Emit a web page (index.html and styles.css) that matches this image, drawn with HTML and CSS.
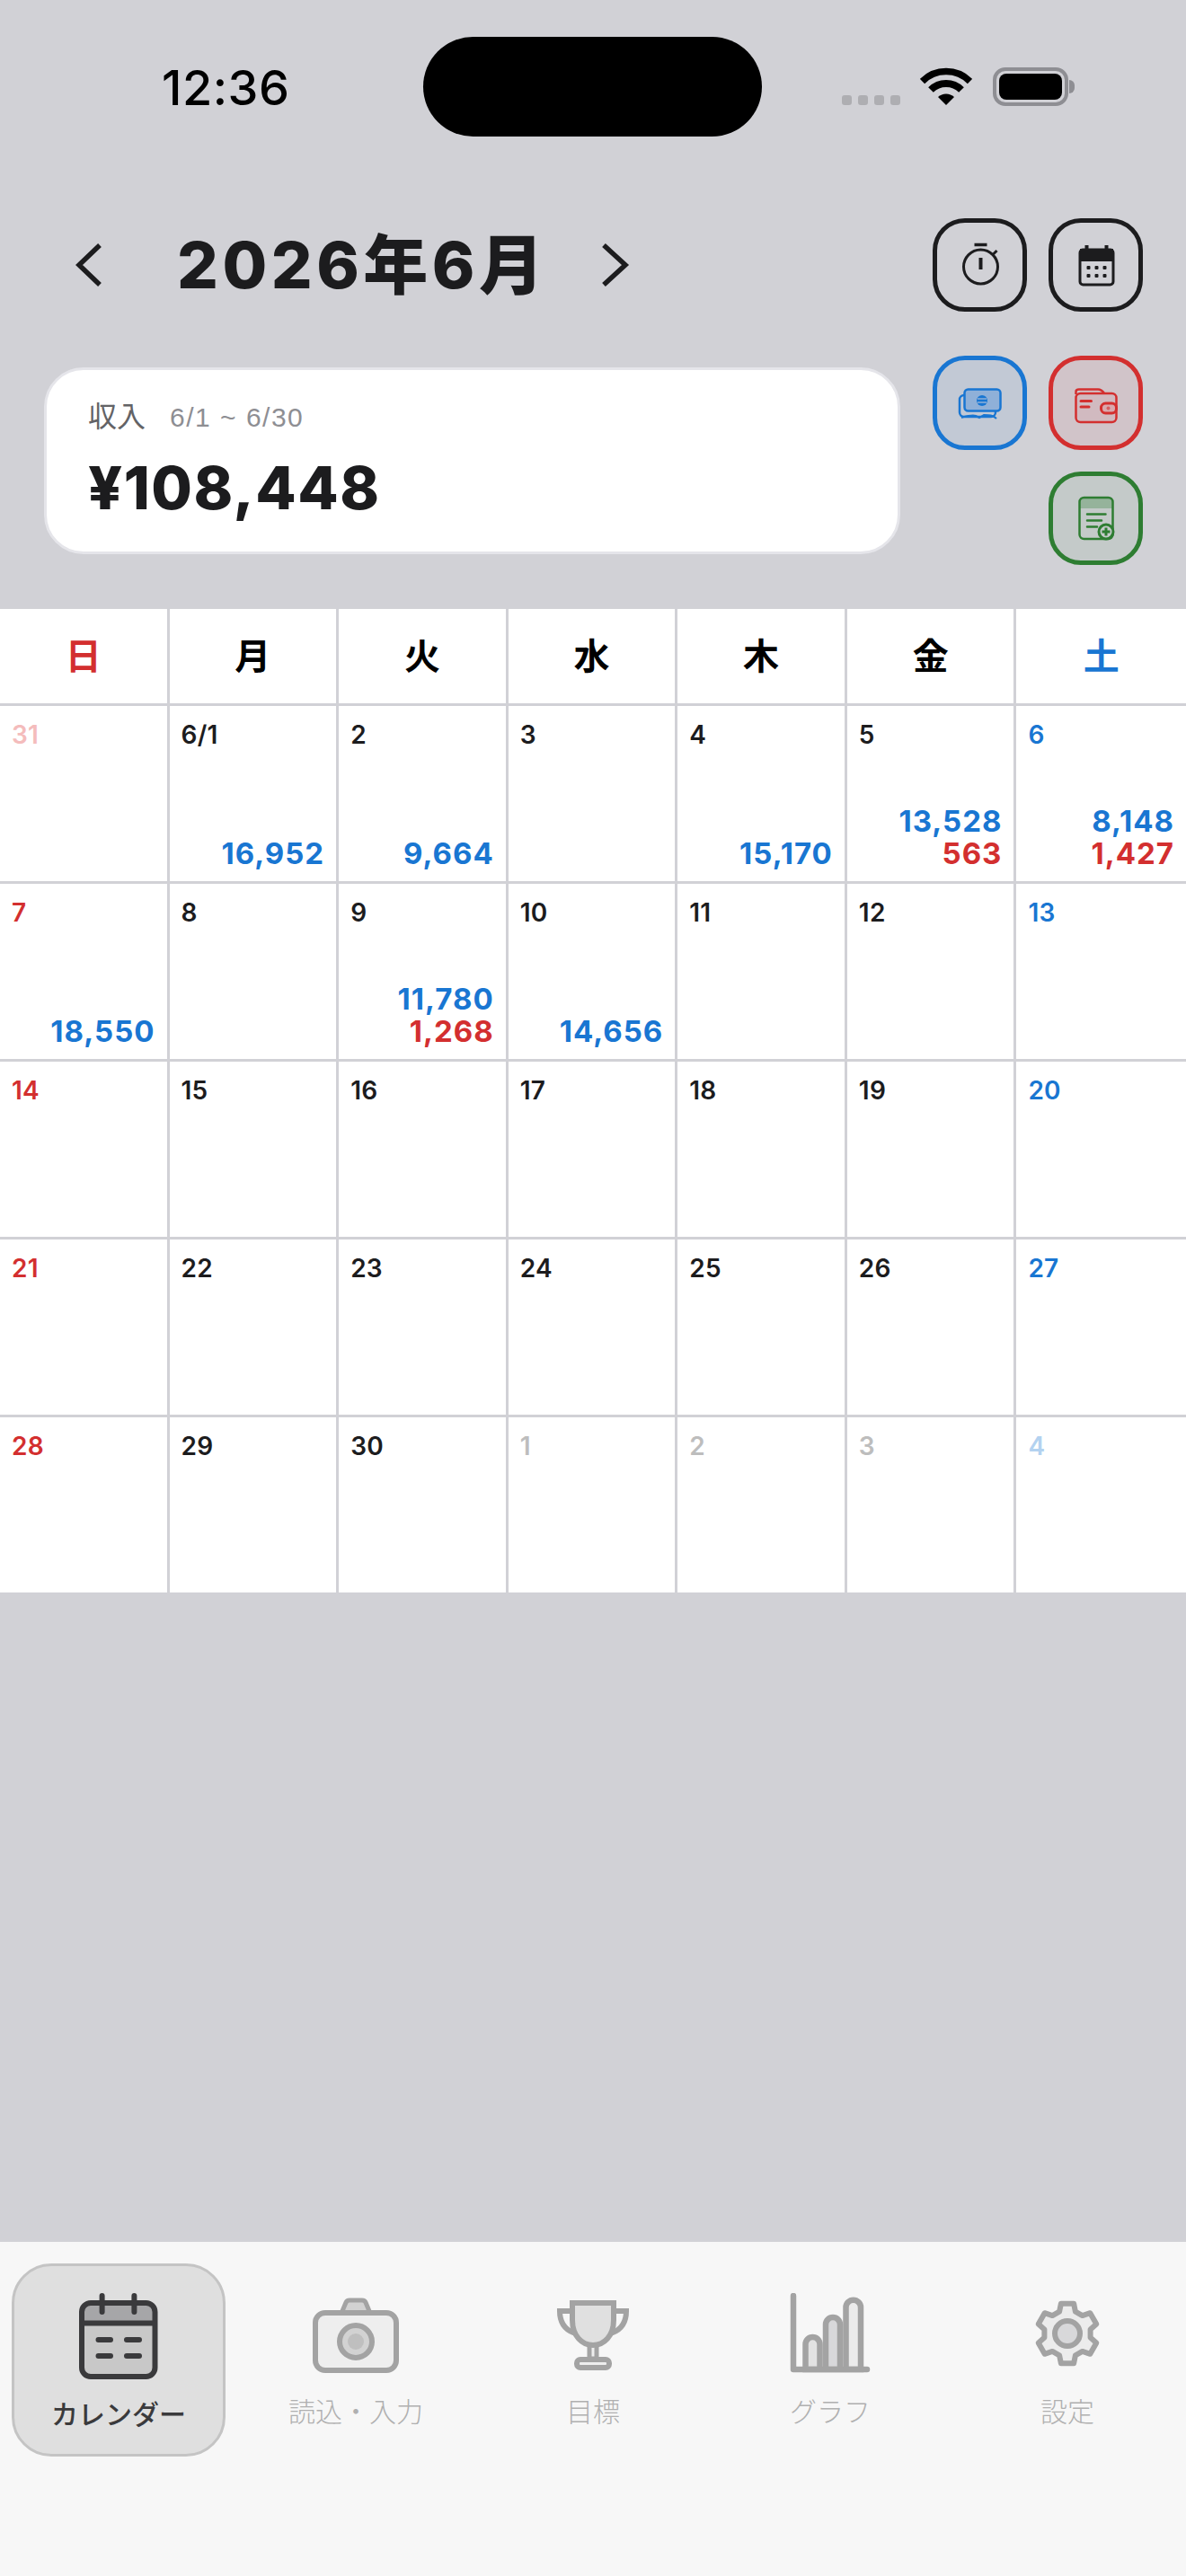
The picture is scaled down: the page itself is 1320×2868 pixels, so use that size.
FILE: index.html
```html
<!DOCTYPE html>
<html lang="ja">
<head>
<meta charset="utf-8">
<title>カレンダー</title>
<link rel="stylesheet" href="styles.css">
</head>
<body>
<div class="phone">
  <header class="status">
    <div class="time">12:36</div>
    <div class="island"></div>
    <div class="status-right">
      <div class="signal"><i></i><i></i><i></i><i></i></div>
      <svg class="wifi" width="58" height="42" viewBox="0 0 58 42">
        <path d="M2.5 15.5A37.5 37.5 0 0 1 55.5 15.5" fill="none" stroke="#000" stroke-width="7.5"/>
        <path d="M12 25A24 24 0 0 1 46 25" fill="none" stroke="#000" stroke-width="8"/>
        <path d="M20 33A13 13 0 0 1 38 33L29 42Z" fill="#000"/>
      </svg>
      <div class="battery"><div class="battery-level"></div></div>
    </div>
  </header>

  <section class="top">
    <div class="top-left">
      <div class="month-nav">
        <svg class="chev" width="48" height="64" viewBox="0 0 48 64"><path d="M36 10L13 32L36 54" fill="none" stroke="#1c1c1e" stroke-width="5.5"/></svg>
        <h1 class="month">2026年6月</h1>
        <svg class="chev" width="48" height="64" viewBox="0 0 48 64"><path d="M11 10L35 32L11 54" fill="none" stroke="#1c1c1e" stroke-width="5.5"/></svg>
      </div>
      <div class="summary">
        <div class="summary-head"><span class="summary-label">収入</span><span class="summary-range">6/1 ~ 6/30</span></div>
        <div class="summary-amount">¥108,448</div>
      </div>
    </div>
    <div class="actions">
      <button class="act act-dark">
        <svg width="64" height="64" viewBox="0 0 64 64" fill="none" stroke="#1c1c1e">
          <circle cx="32.5" cy="34" r="19" stroke-width="3"/>
          <path d="M25.5 9.5H39.5" stroke-width="3.5"/>
          <path d="M32.5 24V37" stroke-width="4"/>
          <path d="M46.5 20L50.5 16" stroke-width="3"/>
        </svg>
      </button>
      <button class="act act-dark">
        <svg width="64" height="64" viewBox="0 0 64 64">
          <path d="M21.5 10V18M43.5 10V18" stroke="#1c1c1e" stroke-width="4" fill="none"/>
          <rect x="14" y="15" width="37" height="39" rx="3.5" fill="none" stroke="#1c1c1e" stroke-width="3"/>
          <path d="M14 14H51V28H14Z" fill="#1c1c1e"/>
          <g fill="#1c1c1e">
            <rect x="21.5" y="33" width="4" height="4" rx="1"/><rect x="30.5" y="33" width="4" height="4" rx="1"/><rect x="39.5" y="33" width="4" height="4" rx="1"/>
            <rect x="21.5" y="42" width="4" height="4" rx="1"/><rect x="30.5" y="42" width="4" height="4" rx="1"/><rect x="39.5" y="42" width="4" height="4" rx="1"/>
          </g>
        </svg>
      </button>
      <button class="act act-blue">
        <svg width="64" height="64" viewBox="0 0 64 64" fill="none" stroke="#1976d2" stroke-width="2.5">
          <rect x="9" y="23" width="40" height="24" rx="5"/>
          <rect x="14.5" y="16.5" width="40" height="24" rx="4" fill="#8fb0d8"/>
          <circle cx="34" cy="29" r="6" fill="#1976d2" stroke="none"/>
          <path d="M29 27H39M29 31H39" stroke="#8fb0d8" stroke-width="1.5"/>
          <path d="M11 48C18 46 24 45 27 46L31 48L36 45C42 45 46 45 50 49" stroke-width="2"/>
        </svg>
      </button>
      <button class="act act-red">
        <svg width="64" height="64" viewBox="0 0 64 64" fill="none" stroke="#d32f2f" stroke-width="2.5">
          <path d="M9.5 22V19C9.500 17 11 16.500 13 16.500H34C37 16.500 39 18 41 21" />
          <rect x="9.500" y="21" width="45" height="32" rx="5" fill="#d1b4ba" fill-opacity=".6"/>
          <rect x="37.500" y="32" width="17" height="11" rx="5" fill="#d9a9ae" stroke-width="3"/>
          <circle cx="45.500" cy="37.500" r="2" fill="#d32f2f" fill-opacity=".6" stroke="none"/>
          <path d="M15 29.500H26.500M15 36H24" stroke-width="3" stroke-linecap="round"/>
        </svg>
      </button>
      <button class="act act-green act-third">
        <svg width="64" height="64" viewBox="0 0 64 64" fill="none" stroke="#2e7d32" stroke-width="2.5">
          <path d="M14 9.500H50V21H14Z" fill="#95b39b" stroke="none"/>
          <rect x="13.500" y="9" width="37" height="46" rx="5"/>
          <path d="M22 27.500H42.500M22 34.500H38M22 41.500H33" stroke-width="2.500" stroke-linecap="round"/>
          <circle cx="43" cy="47" r="8" fill="#c4cbc9" stroke-width="3"/>
          <path d="M38.500 47H47.500M43 42.500V51.500" stroke-width="3"/>
        </svg>
      </button>
    </div>
  </section>

  <section class="calendar">
    <div class="wd sun">日</div><div class="wd">月</div><div class="wd">火</div><div class="wd">水</div><div class="wd">木</div><div class="wd">金</div><div class="wd sat">土</div>

    <div class="cell"><span class="d sun faint">31</span></div>
    <div class="cell"><span class="d">6/1</span><div class="amts"><span class="inc">16,952</span></div></div>
    <div class="cell"><span class="d">2</span><div class="amts"><span class="inc">9,664</span></div></div>
    <div class="cell"><span class="d">3</span></div>
    <div class="cell"><span class="d">4</span><div class="amts"><span class="inc">15,170</span></div></div>
    <div class="cell"><span class="d">5</span><div class="amts"><span class="inc">13,528</span><span class="exp">563</span></div></div>
    <div class="cell"><span class="d sat">6</span><div class="amts"><span class="inc">8,148</span><span class="exp">1,427</span></div></div>

    <div class="cell"><span class="d sun">7</span><div class="amts"><span class="inc">18,550</span></div></div>
    <div class="cell"><span class="d">8</span></div>
    <div class="cell"><span class="d">9</span><div class="amts"><span class="inc">11,780</span><span class="exp">1,268</span></div></div>
    <div class="cell"><span class="d">10</span><div class="amts"><span class="inc">14,656</span></div></div>
    <div class="cell"><span class="d">11</span></div>
    <div class="cell"><span class="d">12</span></div>
    <div class="cell"><span class="d sat">13</span></div>

    <div class="cell"><span class="d sun">14</span></div>
    <div class="cell"><span class="d">15</span></div>
    <div class="cell"><span class="d">16</span></div>
    <div class="cell"><span class="d">17</span></div>
    <div class="cell"><span class="d">18</span></div>
    <div class="cell"><span class="d">19</span></div>
    <div class="cell"><span class="d sat">20</span></div>

    <div class="cell"><span class="d sun">21</span></div>
    <div class="cell"><span class="d">22</span></div>
    <div class="cell"><span class="d">23</span></div>
    <div class="cell"><span class="d">24</span></div>
    <div class="cell"><span class="d">25</span></div>
    <div class="cell"><span class="d">26</span></div>
    <div class="cell"><span class="d sat">27</span></div>

    <div class="cell"><span class="d sun">28</span></div>
    <div class="cell"><span class="d">29</span></div>
    <div class="cell"><span class="d">30</span></div>
    <div class="cell"><span class="d faint">1</span></div>
    <div class="cell"><span class="d faint">2</span></div>
    <div class="cell"><span class="d faint">3</span></div>
    <div class="cell"><span class="d sat faint">4</span></div>
  </section>

  <nav class="tabs">
    <div class="tab tab-active">
      <svg width="96" height="96" viewBox="0 0 96 96">
        <rect x="7" y="11" width="81.500" height="82" rx="10" fill="#c8c8c8"/>
        <path d="M7 33.500V21A10 10 0 0 1 17 11H78.500A10 10 0 0 1 88.500 21V33.500Z" fill="#a6a6a8"/>
        <rect x="7" y="11" width="81.500" height="82" rx="10" fill="none" stroke="#3a3a3c" stroke-width="6"/>
        <path d="M7 33.500H88.500" stroke="#3a3a3c" stroke-width="6"/>
        <path d="M29.600 3V21M65.400 3V21M25.500 52H39M57 52H71M25.500 70H39M57 70H71" stroke="#3a3a3c" stroke-width="6" stroke-linecap="round" fill="none"/>
      </svg>
      <span class="tab-label">カレンダー</span>
    </div>
    <div class="tab">
      <svg width="96" height="96" viewBox="0 0 96 96" stroke="#a3a3a3" stroke-width="6">
        <path d="M33 20L37 10.500Q38 8 41 8H55Q58 8 59 10.500L63 20" fill="#d2d2d2" stroke-width="5"/>
        <rect x="3" y="22" width="90" height="64" rx="11" fill="#eeeeee"/>
        <circle cx="48" cy="54" r="18" fill="#d2d2d2"/>
        <circle cx="48" cy="54" r="9" fill="#bfbfbf" stroke="none"/>
      </svg>
      <span class="tab-label">読込・入力</span>
    </div>
    <div class="tab">
      <svg width="96" height="96" viewBox="0 0 96 96" stroke="#a3a3a3" stroke-width="6" fill="none">
        <path d="M74 20H85C85 32 80 40 70 44M22 20H11C11 32 16 40 26 44" stroke-linecap="round"/>
        <path d="M44 56V73H52V56" fill="#eeeeee" stroke-width="5"/>
        <path d="M25 11H71V30C71 48 60 58 48 58C36 58 25 48 25 30Z" fill="#e0e0e0"/>
        <rect x="30" y="74" width="36" height="9" rx="4" fill="#eeeeee"/>
      </svg>
      <span class="tab-label">目標</span>
    </div>
    <div class="tab">
      <svg width="96" height="96" viewBox="0 0 96 96" stroke="#a3a3a3" stroke-width="6.500" fill="none">
        <path d="M20.500 85V57A8 8 0 0 1 36.500 57V85Z" fill="#e2e2e2"/>
        <path d="M43 85V35A8 8 0 0 1 59 35V85Z" fill="#d8d8da"/>
        <path d="M65.500 85V16A8 8 0 0 1 82 16V85Z" fill="#ebebeb"/>
        <path d="M7 3V85H89" stroke-linecap="round" stroke-linejoin="round"/>
      </svg>
      <span class="tab-label">グラフ</span>
    </div>
    <div class="tab">
      <svg width="96" height="96" viewBox="0 0 96 96" stroke="#a3a3a3" stroke-width="6" stroke-linejoin="round">
        <path d="M39.100 20.600L40.900 11.700H55.100L56.900 20.600L64.700 25.100L73.300 22.200L80.300 34.500L73.600 40.500V49.500L80.300 55.500L73.300 67.800L64.700 64.900L56.900 69.400L55.100 78.300H40.900L39.100 69.400L31.300 64.900L22.700 67.800L15.700 55.500L22.400 49.500V40.500L15.700 34.500L22.700 22.200L31.300 25.100Z" fill="#ececec"/>
        <circle cx="48" cy="45" r="14" fill="#d8d8da"/>
      </svg>
      <span class="tab-label">設定</span>
    </div>
  </nav>
</div>
</body>
</html>
```

FILE: styles.css
```css
* { box-sizing: border-box; }
html, body { margin: 0; padding: 0; }
body {
  background: #d1d1d6;
  font-family: Inter, "Noto Sans CJK JP", sans-serif;
  color: #1c1c1e;
}
.phone {
  width: 1320px;
  height: 2868px;
  display: flex;
  flex-direction: column;
  overflow: hidden;
}

/* status bar */
.status {
  height: 243px;
  flex: none;
  display: grid;
  grid-template-columns: 471px 377px 1fr;
  align-items: start;
}
.time {
  margin: 66px 0 0 180px;
  font-size: 54px;
  font-weight: 500;
  line-height: 64px;
  letter-spacing: .5px;
  color: #000;
}
.island {
  margin-top: 41px;
  height: 111px;
  border-radius: 56px;
  background: #000;
}
.status-right {
  margin: 75px 0 0 89px;
  height: 43px;
  display: flex;
  align-items: flex-end;
}
.signal {
  display: flex;
  gap: 7px;
  margin: 0 22px 1px 0;
}
.signal i {
  width: 11px;
  height: 11px;
  border-radius: 3px;
  background: #aeaeb2;
}
.wifi { margin-bottom: 1px; }
.battery {
  position: relative;
  width: 84px;
  height: 43px;
  margin-left: 23px;
  padding: 3px;
  border: 4px solid #8e8e93;
  border-radius: 14px;
}
.battery::after {
  content: "";
  position: absolute;
  left: 81px;
  top: 10px;
  width: 6px;
  height: 15px;
  border-radius: 0 6px 6px 0;
  background: #8e8e93;
}
.battery-level {
  height: 100%;
  border-radius: 8px;
  background: #000;
}

/* top area */
.top {
  flex: none;
  display: flex;
  justify-content: space-between;
  padding: 0 48px 49px 49px;
}
.top-left { width: 953px; }
.month-nav {
  height: 104px;
  display: flex;
  align-items: center;
  padding-left: 26px;
}
.month {
  margin: 0 0 0 74px;
  width: 464px;
  font-size: 72px;
  font-weight: 800;
  line-height: 104px;
  letter-spacing: 4.500px;
  white-space: nowrap;
}
.summary {
  margin-top: 62px;
  height: 208px;
  padding: 30px 46px 0;
  border: 3px solid #e5e5ea;
  border-radius: 44px;
  background: #fff;
}
.summary-head {
  display: flex;
  align-items: baseline;
  line-height: 44px;
}
.summary-label {
  font-size: 32px;
  color: #636366;
}
.summary-range {
  margin-left: 27px;
  font-family: "Liberation Sans", sans-serif;
  font-size: 30px;
  letter-spacing: 1.500px;
  color: #8e8e93;
}
.summary-amount {
  margin-top: 18px;
  font-size: 66px;
  font-weight: 800;
  line-height: 76px;
  letter-spacing: 1.500px;
}
.actions {
  width: 234px;
  display: grid;
  grid-template-columns: 105px 105px;
  grid-template-rows: 129px 105px 104px;
  column-gap: 24px;
  row-gap: 24px;
}
.act {
  margin: 0;
  padding: 0;
  display: flex;
  align-items: center;
  justify-content: center;
  border: 5px solid;
  border-radius: 36px;
  background: transparent;
}
.act-dark { border-color: #1c1c1e; height: 104px; }
.act-blue { border-color: #1976d2; background: rgba(25, 118, 210, .08); }
.act-red { border-color: #d32f2f; background: rgba(211, 47, 47, .08); }
.act-green { border-color: #2e7d32; background: rgba(46, 125, 50, .08); }
.act-third { grid-column: 2; }

/* calendar */
.calendar {
  flex: none;
  display: grid;
  grid-template-columns: repeat(7, 1fr);
  grid-template-rows: 108px repeat(5, 198px);
  background: #fff;
}
.wd, .cell {
  border-right: 3px solid #d1d1d6;
  border-bottom: 3px solid #d1d1d6;
}
.wd:nth-child(7n), .cell:nth-child(7n) { border-right-width: 0; }
.wd {
  display: flex;
  align-items: center;
  justify-content: center;
  padding-bottom: 6px;
  font-family: "Noto Sans CJK JP", sans-serif;
  font-size: 40px;
  font-weight: 700;
  color: #000;
}
.cell {
  display: flex;
  flex-direction: column;
  padding: 15px 13px 13px 13px;
  min-width: 0;
}
.d {
  font-size: 28px;
  font-weight: 600;
  line-height: 34px;
  letter-spacing: .2px;
}
.amts {
  margin-top: auto;
  display: flex;
  flex-direction: column;
  align-items: flex-end;
  font-size: 33px;
  font-weight: 700;
  line-height: 36px;
  letter-spacing: 1px;
}
.inc { color: #1976d2; }
.exp { color: #d32f2f; }
.wd.sun, .d.sun { color: #d32f2f; }
.wd.sat, .d.sat { color: #1976d2; }
.faint { color: #bdbdbd; }
.d.sun.faint { color: #f4bcbc; }
.d.sat.faint { color: #b3d2f0; }

/* tab bar */
.tabs {
  margin-top: auto;
  height: 372px;
  flex: none;
  display: grid;
  grid-template-columns: repeat(5, 1fr);
  align-items: start;
  padding-top: 24px;
  background: #f7f7f7;
}
.tab {
  height: 215px;
  margin: 0 13px;
  padding-top: 30px;
  display: flex;
  flex-direction: column;
  align-items: center;
  border: 3px solid transparent;
  border-radius: 44px;
}
.tab-active {
  border-color: #c4c4c4;
  background: #dfdfdf;
}
.tab-label {
  margin-top: 14px;
  font-family: "Noto Sans CJK JP", sans-serif;
  font-size: 30px;
  font-weight: 300;
  line-height: 40px;
  white-space: nowrap;
  color: #b0b0b0;
}
.tab-active .tab-label {
  margin-top: 17px;
  font-weight: 500;
  color: #3a3a3c;
}
```
